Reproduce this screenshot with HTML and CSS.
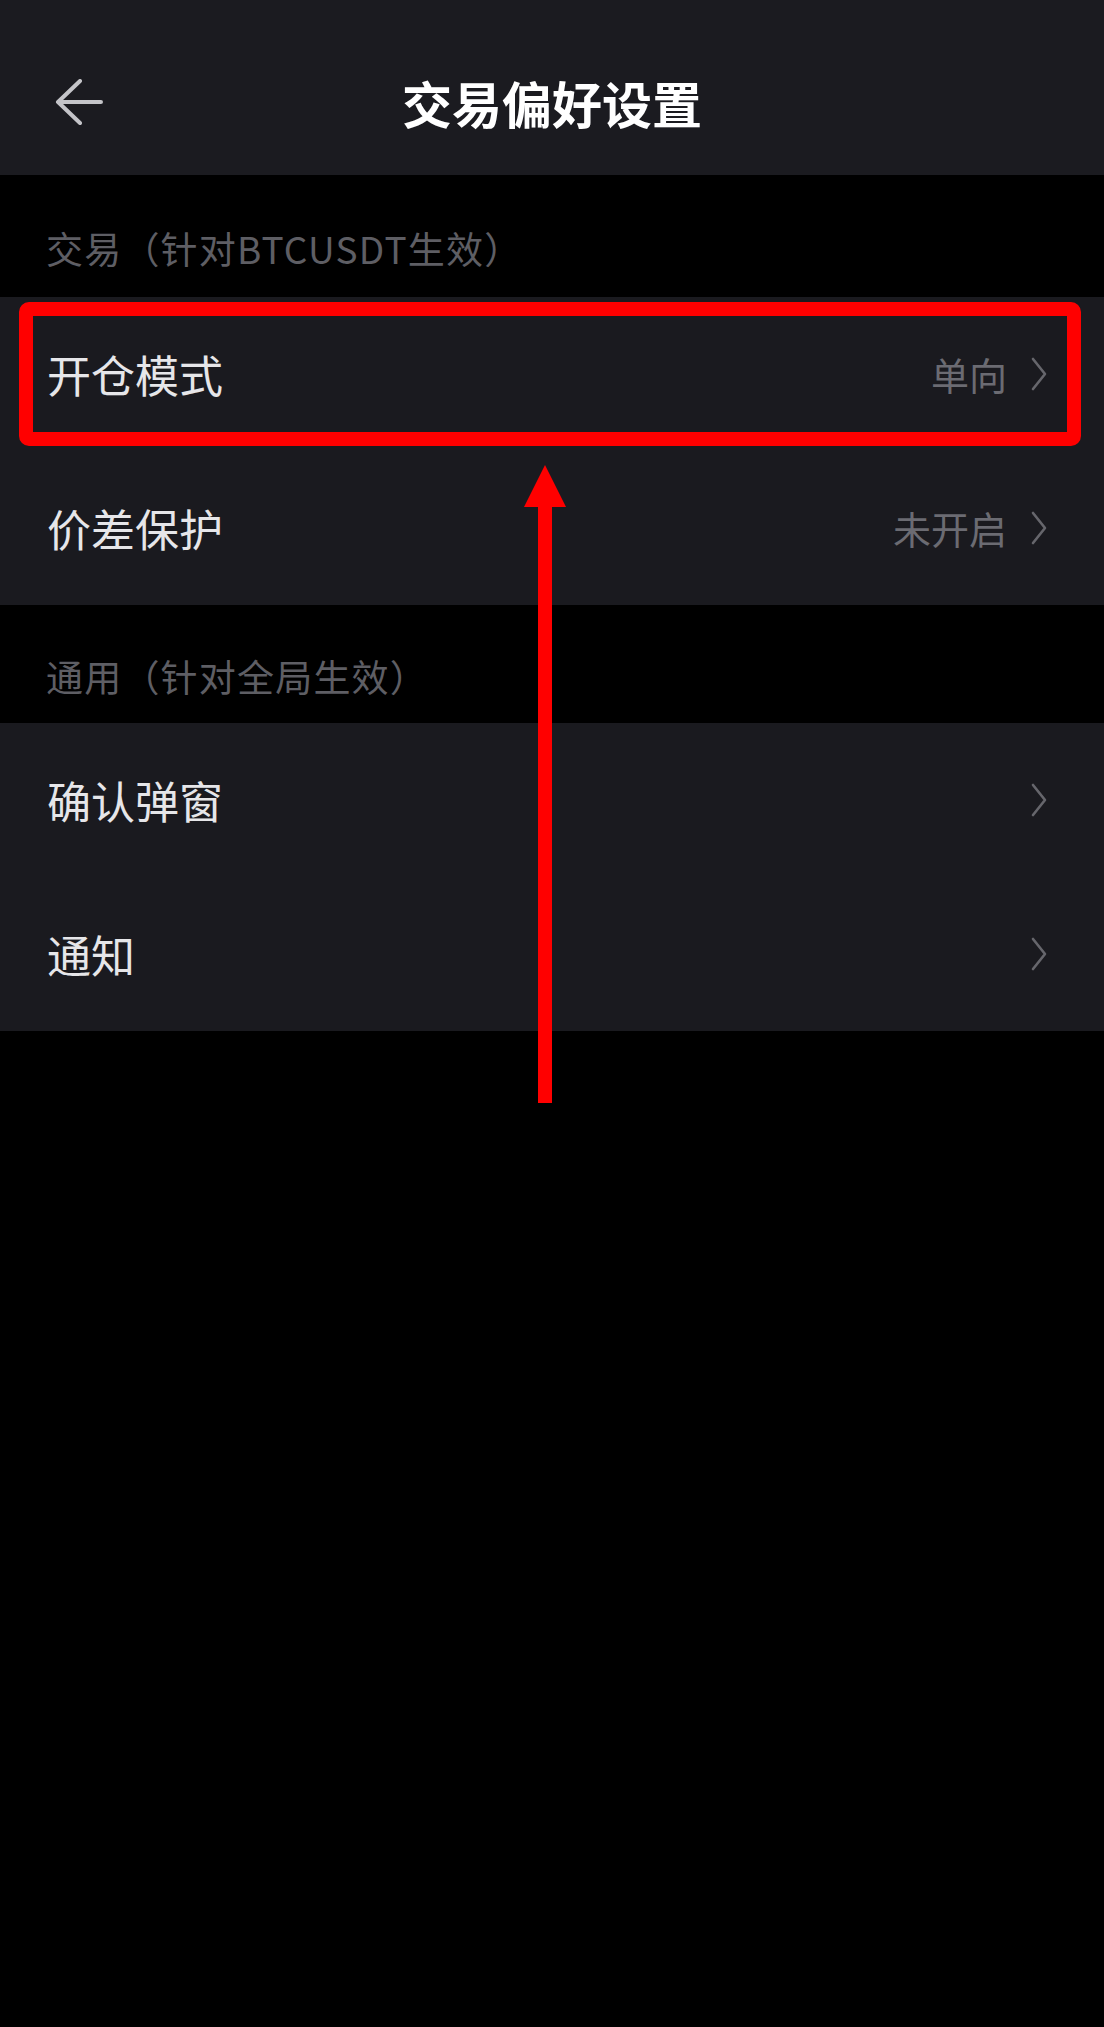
FILE: index.html
```html
<!DOCTYPE html>
<html lang="zh-CN">
<head>
<meta charset="utf-8">
<title>交易偏好设置</title>
<link rel="stylesheet" href="styles.css">
</head>
<body>
<div class="page">
  <header class="topbar">
    <span class="back">
      <svg width="48" height="46" viewBox="0 0 48 46" fill="none" stroke="currentColor" stroke-width="4" stroke-linecap="round" stroke-linejoin="round"><path d="M46 23H3M25 2L3 23L25 44"/></svg>
    </span>
    <h1 class="title">交易偏好设置</h1>
  </header>

  <div class="section-label first">交易（针对BTCUSDT生效）</div>
  <div class="group">
    <div class="row highlighted">
      <span class="row-name">开仓模式</span>
      <span class="row-right"><span class="row-value">单向</span><svg class="chev" width="16" height="34" viewBox="0 0 16 34" fill="none" stroke="currentColor" stroke-width="2.6" stroke-linecap="round" stroke-linejoin="round"><path d="M2 2L14 17L2 32"/></svg></span>
      <span class="mark"></span>
    </div>
    <div class="row">
      <span class="row-name">价差保护</span>
      <span class="row-right"><span class="row-value">未开启</span><svg class="chev" width="16" height="34" viewBox="0 0 16 34" fill="none" stroke="currentColor" stroke-width="2.6" stroke-linecap="round" stroke-linejoin="round"><path d="M2 2L14 17L2 32"/></svg></span>
    </div>
  </div>

  <div class="section-label second">通用（针对全局生效）</div>
  <div class="group">
    <div class="row">
      <span class="row-name">确认弹窗</span>
      <span class="row-right"><svg class="chev" width="16" height="34" viewBox="0 0 16 34" fill="none" stroke="currentColor" stroke-width="2.6" stroke-linecap="round" stroke-linejoin="round"><path d="M2 2L14 17L2 32"/></svg></span>
    </div>
    <div class="row">
      <span class="row-name">通知</span>
      <span class="row-right"><svg class="chev" width="16" height="34" viewBox="0 0 16 34" fill="none" stroke="currentColor" stroke-width="2.6" stroke-linecap="round" stroke-linejoin="round"><path d="M2 2L14 17L2 32"/></svg></span>
    </div>
  </div>

  <svg class="pointer" width="42" height="638" viewBox="0 0 42 638"><polygon points="21,0 42,42 0,42" fill="#ff0000"/><rect x="14" y="41" width="14" height="597" fill="#ff0000"/></svg>
</div>
</body>
</html>
```

FILE: styles.css
```css
html, body {
  margin: 0;
  padding: 0;
  background: #000;
}

body {
  font-family: "Noto Sans CJK SC", "Noto Sans", sans-serif;
  text-spacing-trim: space-all;
}

.page {
  position: relative;
  width: 1104px;
  min-height: 2027px;
  background: #000;
}

.topbar {
  box-sizing: border-box;
  height: 175px;
  padding-top: 29px;
  background: #1b1b20;
  display: grid;
  grid-template-columns: 1fr auto 1fr;
  align-items: center;
}

.back {
  grid-column: 1;
  grid-row: 1;
  padding-left: 55px;
  color: #c4c4c8;
  display: flex;
  align-items: center;
}

.title {
  grid-column: 2;
  grid-row: 1;
  margin: 0;
  font-size: 50px;
  line-height: 60px;
  font-weight: 700;
  color: #ffffff;
}

.section-label {
  box-sizing: border-box;
  padding-left: 46px;
  font-size: 37px;
  line-height: 44px;
  letter-spacing: 1.2px;
  color: #5e5e64;
}

.section-label.first {
  height: 122px;
  padding-top: 51px;
}

.section-label.second {
  height: 118px;
  padding-top: 49px;
}

.group {
  background: #1a1a1f;
}

.row {
  position: relative;
  box-sizing: border-box;
  height: 154px;
  padding: 0 57px 0 47px;
  display: flex;
  align-items: center;
  justify-content: space-between;
}

.row-name {
  font-size: 44px;
  line-height: 52px;
  color: #e6e6e9;
}

.row-right {
  display: flex;
  align-items: center;
  gap: 24px;
}

.row-value {
  font-size: 38px;
  line-height: 46px;
  color: #6b6b72;
}

.chev {
  display: block;
  color: #66666c;
}

.mark {
  position: absolute;
  top: 5px;
  left: 19px;
  right: 23px;
  bottom: 5px;
  border: 14px solid #ff0000;
  border-radius: 10px;
  box-sizing: border-box;
}

.pointer {
  position: absolute;
  left: 524px;
  top: 465px;
  display: block;
}
```
